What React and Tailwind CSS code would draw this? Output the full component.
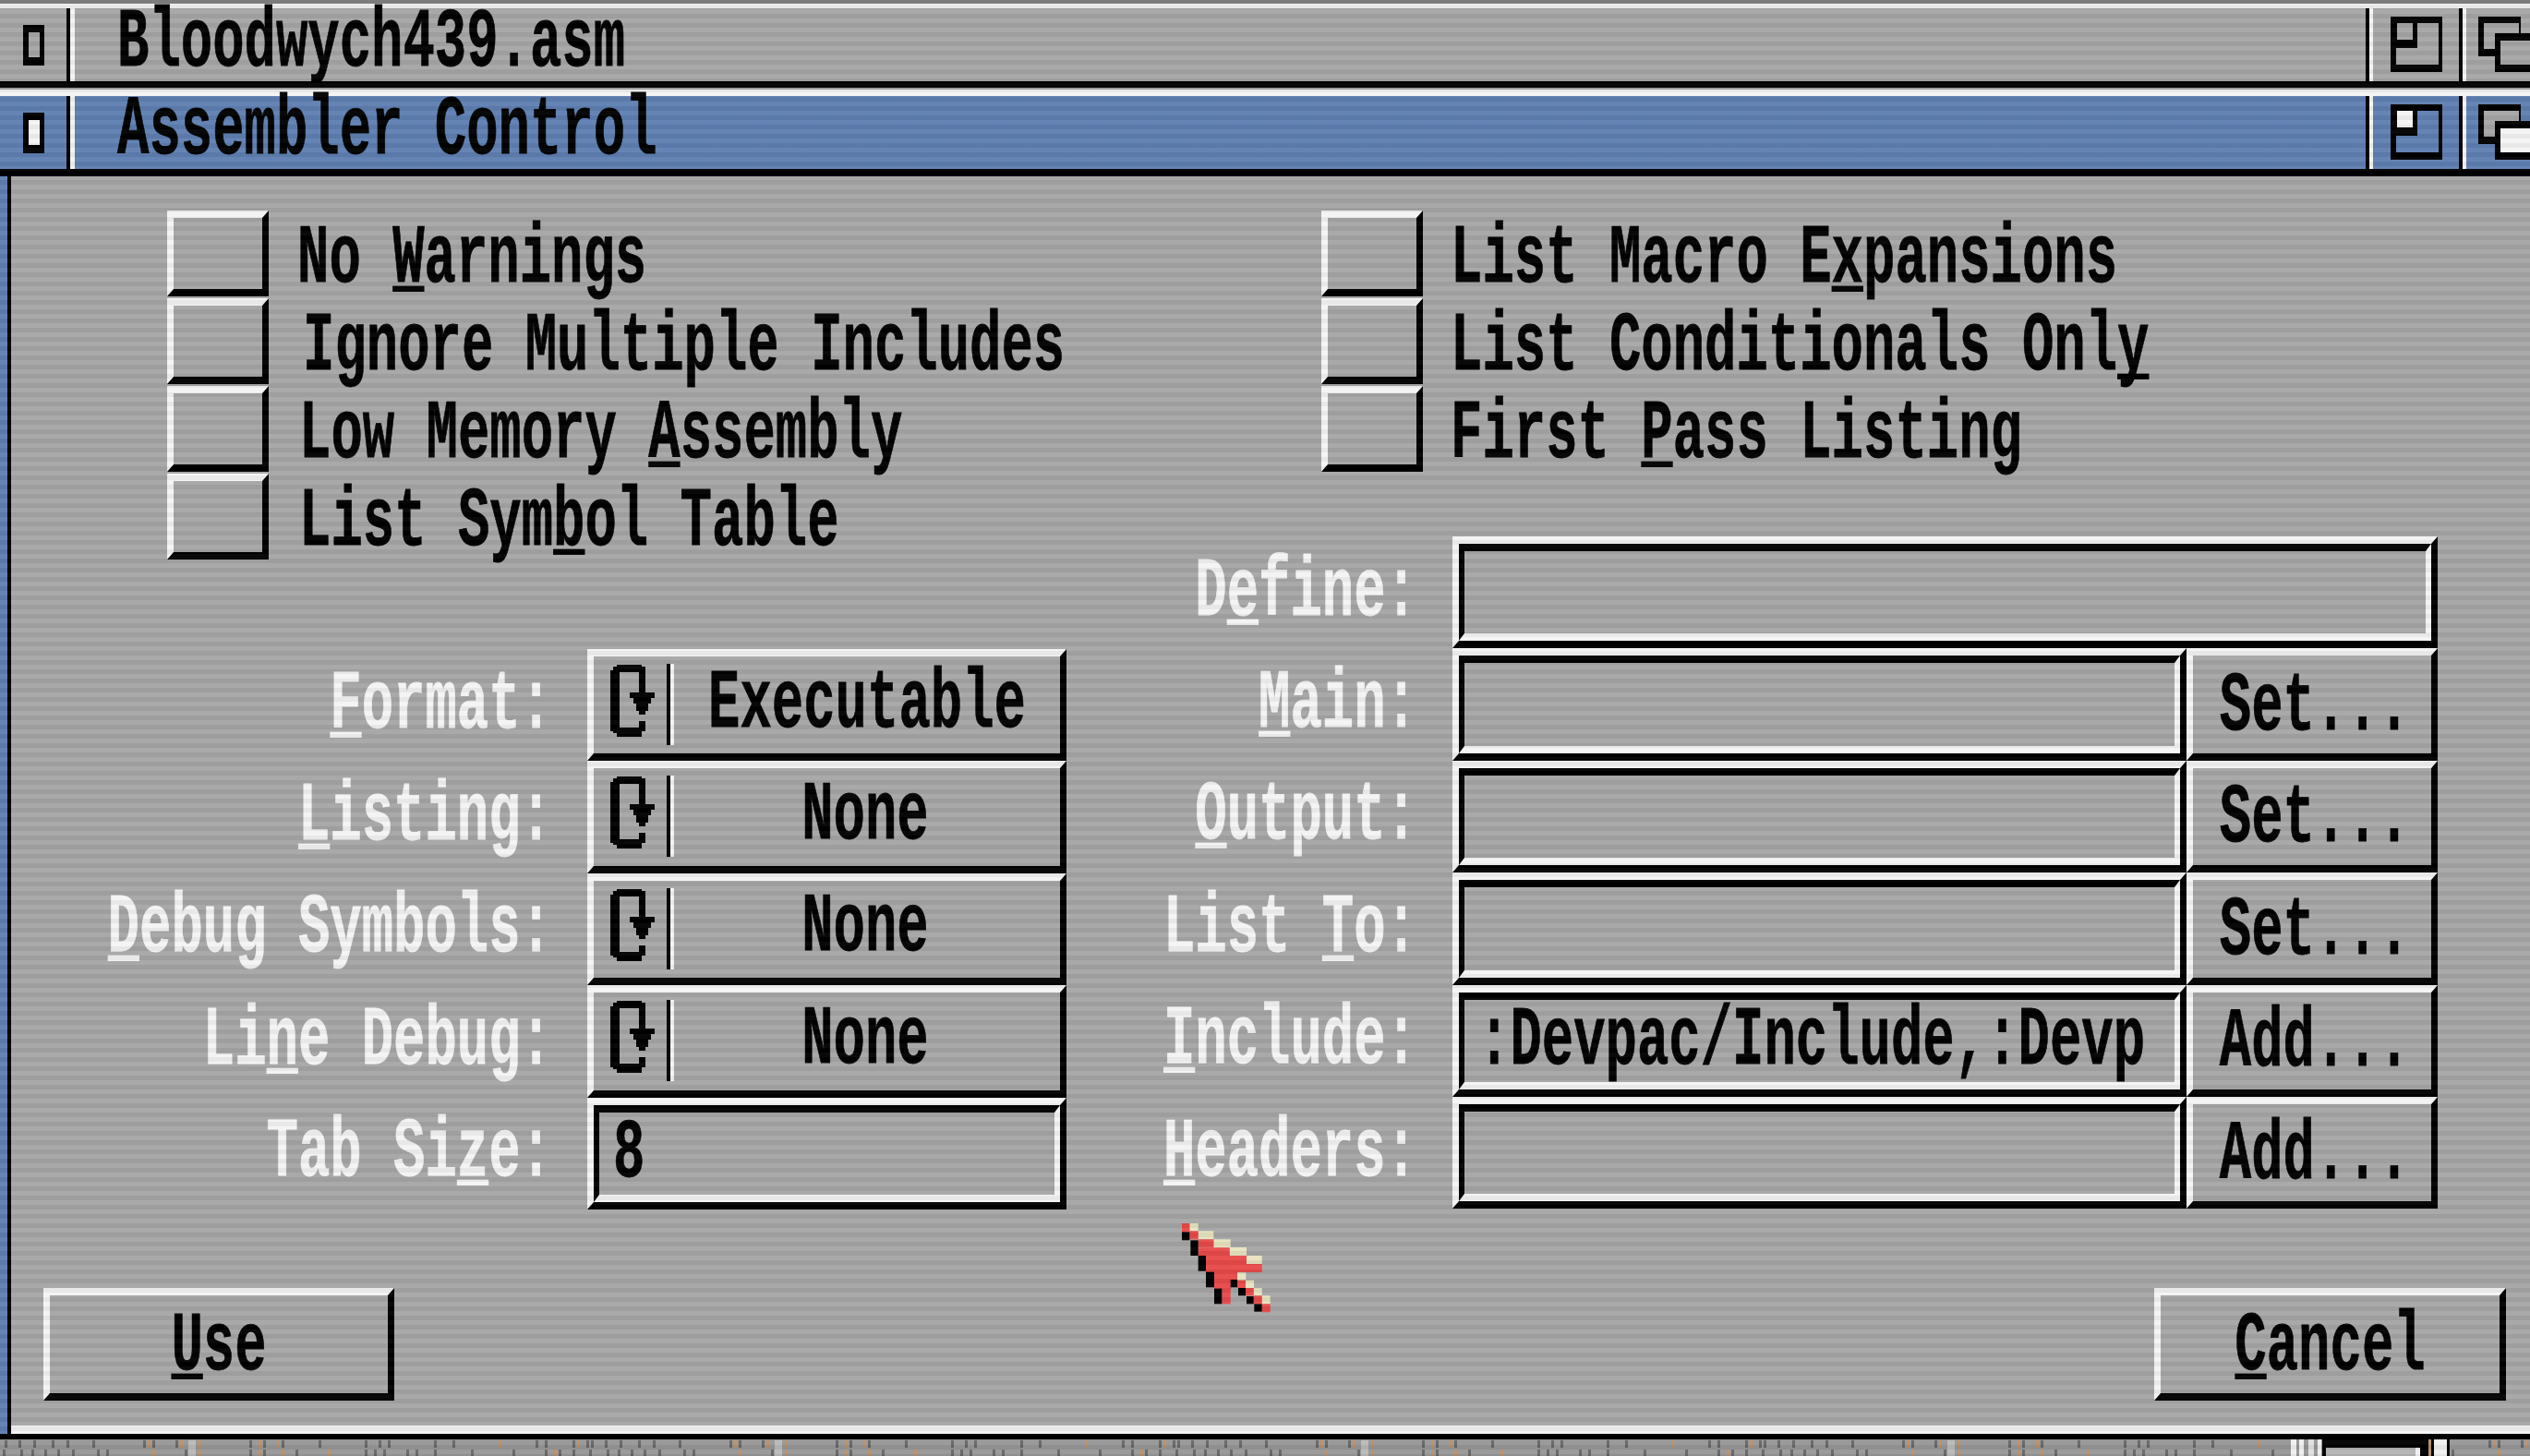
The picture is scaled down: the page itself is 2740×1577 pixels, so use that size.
import React from "react";

const RAISED = "border-t-8 border-l-[7px] border-b-8 border-r-[7px] border-t-[#f4f4f4] border-l-[#f4f4f4] border-b-black border-r-black";
const SUNK = "border-t-8 border-l-[6px] border-b-8 border-r-[6px] border-t-black border-l-black border-b-[#f4f4f4] border-r-[#f4f4f4]";

function T({ children, className = "" }) {
  return (
    <span className={"inline-block font-['Liberation_Mono',monospace] font-bold text-[57.3px] leading-none whitespace-pre scale-y-[1.58] [-webkit-text-stroke:0.5px_currentColor] " + className}>
      {children}
    </span>
  );
}

function K({ children }) {
  return <span className="underline decoration-[4px] underline-offset-[3px] [text-decoration-skip-ink:none]">{children}</span>;
}

function ZoomIcon({ fill }) {
  return (
    <svg width="56" height="60" viewBox="0 0 56 60" className="shrink-0">
      <path fill="#000" d="M0 0H56V7H0Z M0 52H56V60H0Z M0 0H6V60H0Z M52 0H56V60H52Z" />
      <path fill="#000" d="M6 7H29V34H6Z" />
      <rect x="7" y="7" width="17" height="18" fill={fill} />
    </svg>
  );
}

function DepthIcon({ back, front }) {
  return (
    <svg width="56" height="60" viewBox="0 0 56 60" className="shrink-0">
      <rect x="0" y="0" width="46" height="43" fill="#000" />
      <rect x="6" y="7" width="38" height="28" fill={back} />
      <rect x="18" y="18" width="38" height="42" fill="#000" />
      <rect x="24" y="26" width="32" height="26" fill={front} />
    </svg>
  );
}

function Title({ active, text }) {
  const bg = active ? "bg-[#5f80b2]" : "";
  const inner = active ? "#f4f4f4" : "#a6a6a6";
  const paneBg = active ? "#5f80b2" : "#a6a6a6";
  return (
    <div className={"flex h-[79px] items-stretch border-b-0 " + bg}>
      <div className="flex w-[72px] items-center justify-center">
        <svg width="23" height="44" viewBox="0 0 23 44">
          <rect width="23" height="44" fill="#000" />
          <rect x="6" y="8" width="12" height="27" fill={inner} />
        </svg>
      </div>
      <div className="w-[4px] bg-black" />
      <div className="w-[5px] bg-[#f4f4f4]" />
      <div className="flex w-[2481px] items-center pl-[46px] pb-[3px]">
        <T className="text-black">{text}</T>
      </div>
      <div className="w-[4px] bg-black" />
      <div className="w-[4px] bg-[#f4f4f4]" />
      <div className="flex w-[93px] items-center justify-center pb-[1px]">
        <ZoomIcon fill={inner} />
      </div>
      <div className="w-[4px] bg-black" />
      <div className="w-[4px] bg-[#f4f4f4]" />
      <div className="flex flex-1 items-center overflow-hidden pl-[13px] pb-[1px]">
        <DepthIcon back="#a6a6a6" front={active ? "#f4f4f4" : paneBg} />
      </div>
    </div>
  );
}

function Check({ label, gap }) {
  return (
    <div className="mb-[2px] flex h-[93px] items-center">
      <div className={"h-[93px] w-[110px] shrink-0 " + RAISED} />
      <div className={"pt-[13px] text-black " + gap}>{label}</div>
    </div>
  );
}

function CycleGlyph() {
  return (
    <svg width="48" height="78" viewBox="0 0 48 78" className="shrink-0">
      <path fill="#000" d="M0 6H3V2H7V0H34V2H38V26H31V8H10V68H31V61H38V72H34V78H7V74H3V72H0Z" />
      <path fill="#000" d="M31 24H38V30H48V36H44V42H41V50H38V54H31V50H28V42H25V36H21V30H31Z" />
    </svg>
  );
}

function Cycle({ value, shift }) {
  return (
    <div className={"flex h-full w-[519px] items-stretch pt-[9px] " + RAISED}>
      <div className="flex w-[18px] shrink-0" />
      <div className="flex w-[61px] shrink-0 items-start">
        <CycleGlyph />
      </div>
      <div className="my-[-1px] h-[88px] w-[4px] shrink-0 bg-black" />
      <div className="my-[-1px] h-[88px] w-[4px] shrink-0 bg-[#f4f4f4]" />
      <div className={"flex flex-1 items-center justify-center pb-[12px] " + (shift || "")}>
        <T className="text-black">{value}</T>
      </div>
    </div>
  );
}

function Field({ w, value }) {
  return (
    <div className={"h-full " + w + " " + RAISED}>
      <div className={"flex h-full items-center pl-[15px] " + SUNK}>
        {value ? <T className="text-black">{value}</T> : null}
      </div>
    </div>
  );
}

function Btn({ w, children, extra }) {
  return (
    <div className={"flex h-full items-center justify-center " + (extra || "") + " " + w + " " + RAISED}>
      <T className="text-black">{children}</T>
    </div>
  );
}

function Row({ labelW, pr, label, children }) {
  return (
    <div className="flex h-[121.4px] items-stretch">
      <div className={"flex shrink-0 items-center justify-end pb-[1px] " + labelW + " " + pr}>
        <T className="text-[#f4f4f4]">{label}</T>
      </div>
      {children}
    </div>
  );
}

function Cursor() {
  const cream = [[265,75,28,25],[293,100,50,27],[343,127,55,27],[395,153,55,27],[450,180,50,27],[420,235,28,25],[447,260,27,25],[473,285,27,25],[500,310,27,27]];
  const red = [[240,75,25,28],[265,100,28,27],[293,127,50,27],[293,154,102,27],[318,180,132,27],[318,207,182,27],[345,234,75,27],[345,261,55,27],[370,288,28,27],[370,315,28,22],[420,260,27,25],[447,285,26,25],[473,310,27,27],[500,337,27,27]];
  const black = [[240,103,25,27],[268,130,25,50],[293,180,25,50],[318,233,27,50],[345,287,25,50],[398,258,22,25],[423,285,24,25],[450,312,23,25],[475,337,25,25]];
  const draw = (list, fill) => list.map((r, i) => <rect key={fill + i} x={r[0]} y={r[1]} width={r[2]} height={r[3]} fill={fill} />);
  return (
    <svg className="pointer-events-none absolute left-[1200px] top-[1300px]" width="200" height="140" viewBox="0 0 600 420">
      {draw(cream, "#e8e4c0")}
      {draw(red, "#e84a4a")}
      {draw(black, "#000")}
    </svg>
  );
}

function Strip() {
  const upper = [5,20,36,56,72,100,155,165,190,205,270,285,305,345,395,410,420,470,490,540,580,590,620,635];
  const upperOrange = [160,195,215,280,300,540,625];
  const lower = [3,22,34,48,62,78,105,115,165,200,270,285,320,395,405,415,440,450,470,510,555,590,605,620];
  const lowerOrange = [165,205,215,280,305,355,600];
  const items = [];
  for (let k = 0; k < 5; k++) {
    const o = k * 635;
    upper.forEach((x, i) => items.push(<rect key={"u" + k + i} x={o + x} y="1" width="3" height="8" fill="#666666" />));
    upperOrange.forEach((x, i) => items.push(<rect key={"o" + k + i} x={o + x} y="1" width="3" height="8" fill="#bd8f66" />));
    lower.forEach((x, i) => items.push(<rect key={"l" + k + i} x={o + x} y="11" width="3" height="8" fill="#666666" />));
    lowerOrange.forEach((x, i) => items.push(<rect key={"p" + k + i} x={o + x} y="11" width="3" height="8" fill="#bd8f66" />));
    items.push(<rect key={"w" + k} x={o + 204} y="1" width="8" height="18" fill="#b9b9b9" />);
  }
  return (
    <svg width="2740" height="19" viewBox="0 0 2740 19" className="block bg-[#979797]">
      {items}
      <rect x="2480" y="0" width="36" height="19" fill="#979797" />
      <rect x="2481" y="0" width="6" height="19" fill="#f0f0f0" />
      <rect x="2490" y="0" width="5" height="19" fill="#f0f0f0" />
      <rect x="2500" y="0" width="6" height="19" fill="#e0e0e0" />
      <rect x="2510" y="0" width="4" height="19" fill="#f0f0f0" />
      <rect x="2515" y="0" width="115" height="19" fill="#000" />
      <rect x="2519" y="9" width="97" height="10" fill="#b4b4b4" />
      <rect x="2616" y="9" width="5" height="10" fill="#f0f0f0" />
      <rect x="2630" y="0" width="3" height="19" fill="#b58e6e" />
      <rect x="2633" y="0" width="3" height="19" fill="#000" />
      <rect x="2636" y="0" width="14" height="19" fill="#f0f0f0" />
      <rect x="2650" y="0" width="3" height="19" fill="#000" />
    </svg>
  );
}

export default function App() {
  const setProps = { w: "w-[272px]", extra: "pl-[6px] pt-[5px]" };
  return (
    <div className="relative h-[1577px] w-[2740px] overflow-hidden bg-[#a6a6a6]">
      <div className="h-[4px] bg-[#777777]" />
      <div className="h-[5px] bg-[#f4f4f4]" />
      <Title text="Bloodwych439.asm" />
      <div className="h-[7px] bg-black" />
      <div className="h-[2px]" />
      <div className="h-[7px] bg-[#f4f4f4]" />
      <Title active text="Assembler Control" />
      <div className="h-[8px] bg-black" />

      <div className="flex h-[1362px]">
        <div className="w-[8px] bg-[#5f80b2]" />
        <div className="w-[4px] bg-black" />
        <div className="flex flex-1 flex-col border-b-[9px] border-b-[#f4f4f4] pt-[37px]">
          <div className="flex">
            <div className="w-[1143px] shrink-0">
              <div className="flex flex-col pl-[169px]">
                <Check gap="ml-[31px]" label={<T>No <K>W</K>arnings</T>} />
                <Check gap="ml-[37px]" label={<T>Ignore Multiple Includes</T>} />
                <Check gap="ml-[33px]" label={<T>Low Memory <K>A</K>ssembly</T>} />
                <Check gap="ml-[33px]" label={<T>List Sym<K>b</K>ol Table</T>} />
              </div>
              <div className="mt-[95px] flex flex-col">
                <Row labelW="w-[624px]" pr="pr-[38px]" label={<><K>F</K>ormat:</>}><Cycle value="Executable" /></Row>
                <Row labelW="w-[624px]" pr="pr-[38px]" label={<><K>L</K>isting:</>}><Cycle value="None" shift="pr-[4px]" /></Row>
                <Row labelW="w-[624px]" pr="pr-[38px]" label={<><K>D</K>ebug Symbols:</>}><Cycle value="None" shift="pr-[4px]" /></Row>
                <Row labelW="w-[624px]" pr="pr-[38px]" label={<>Li<K>n</K>e Debug:</>}><Cycle value="None" shift="pr-[4px]" /></Row>
                <Row labelW="w-[624px]" pr="pr-[38px]" label={<>Tab Si<K>z</K>e:</>}><Field w="w-[519px]" value="8" /></Row>
              </div>
            </div>
            <div className="flex-1">
              <div className="flex flex-col pl-[276px]">
                <Check gap="ml-[30px]" label={<T>List Macro E<K>x</K>pansions</T>} />
                <Check gap="ml-[30px]" label={<T>List Conditionals Onl<K>y</K></T>} />
                <Check gap="ml-[30px]" label={<T>First <K>P</K>ass Listing</T>} />
              </div>
              <div className="mt-[68px] flex flex-col">
                <Row labelW="w-[418px]" pr="pr-[38px]" label={<>D<K>e</K>fine:</>}><Field w="w-[1067px]" /></Row>
                <Row labelW="w-[418px]" pr="pr-[38px]" label={<><K>M</K>ain:</>}><Field w="w-[795px]" /><Btn {...setProps}>Set...</Btn></Row>
                <Row labelW="w-[418px]" pr="pr-[38px]" label={<><K>O</K>utput:</>}><Field w="w-[795px]" /><Btn {...setProps}>Set...</Btn></Row>
                <Row labelW="w-[418px]" pr="pr-[38px]" label={<>List <K>T</K>o:</>}><Field w="w-[795px]" /><Btn {...setProps}>Set...</Btn></Row>
                <Row labelW="w-[418px]" pr="pr-[38px]" label={<><K>I</K>nclude:</>}><Field w="w-[795px]" value=":Devpac/Include,:Devp" /><Btn {...setProps}>Add...</Btn></Row>
                <Row labelW="w-[418px]" pr="pr-[38px]" label={<><K>H</K>eaders:</>}><Field w="w-[795px]" /><Btn {...setProps}>Add...</Btn></Row>
              </div>
            </div>
          </div>
          <div className="mt-[85px] flex h-[122px] justify-between pl-[35px] pr-[26px]">
            <Btn w="w-[380px]" extra="pt-[6px]"><K>U</K>se</Btn>
            <Btn w="w-[381px]" extra="pt-[6px]"><K>C</K>ancel</Btn>
          </div>
        </div>
      </div>

      <div className="h-[6px] bg-black" />
      <Strip />

      <Cursor />
      <div className="pointer-events-none absolute inset-0 bg-[repeating-linear-gradient(to_bottom,rgba(255,255,255,0.035)_0px,rgba(255,255,255,0.035)_5px,rgba(0,0,0,0.05)_5px,rgba(0,0,0,0.05)_10px)]" />
    </div>
  );
}
